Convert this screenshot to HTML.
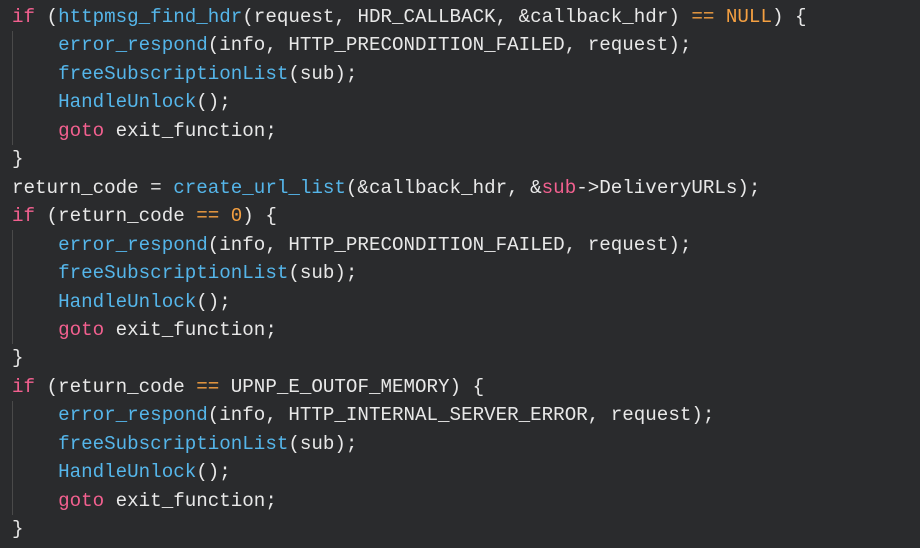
<!DOCTYPE html>
<html><head><meta charset="utf-8"><style>
html,body{margin:0;padding:0;background:#2a2b2d;width:920px;height:548px;overflow:hidden}
pre{margin:0;padding:3px 0 0 12px;font-family:"Liberation Mono",monospace;font-size:19.2px;line-height:28.45px;color:#e8e8e8;position:relative}
.k{color:#f2608f}.f{color:#55b6ea}.o{color:#f5a041}
.g{position:absolute;left:12px;width:1px;background:#4a4a4a}
</style></head><body>
<div class="g" style="top:31px;height:114px"></div>
<div class="g" style="top:230px;height:114px"></div>
<div class="g" style="top:401px;height:114px"></div>
<pre><span class="k">if</span> (<span class="f">httpmsg_find_hdr</span>(request, HDR_CALLBACK, &amp;callback_hdr) <span class="o">==</span> <span class="o">NULL</span>) {
    <span class="f">error_respond</span>(info, HTTP_PRECONDITION_FAILED, request);
    <span class="f">freeSubscriptionList</span>(sub);
    <span class="f">HandleUnlock</span>();
    <span class="k">goto</span> exit_function;
}
return_code = <span class="f">create_url_list</span>(&amp;callback_hdr, &amp;<span class="k">sub</span>-&gt;DeliveryURLs);
<span class="k">if</span> (return_code <span class="o">==</span> <span class="o">0</span>) {
    <span class="f">error_respond</span>(info, HTTP_PRECONDITION_FAILED, request);
    <span class="f">freeSubscriptionList</span>(sub);
    <span class="f">HandleUnlock</span>();
    <span class="k">goto</span> exit_function;
}
<span class="k">if</span> (return_code <span class="o">==</span> UPNP_E_OUTOF_MEMORY) {
    <span class="f">error_respond</span>(info, HTTP_INTERNAL_SERVER_ERROR, request);
    <span class="f">freeSubscriptionList</span>(sub);
    <span class="f">HandleUnlock</span>();
    <span class="k">goto</span> exit_function;
}</pre>
</body></html>
